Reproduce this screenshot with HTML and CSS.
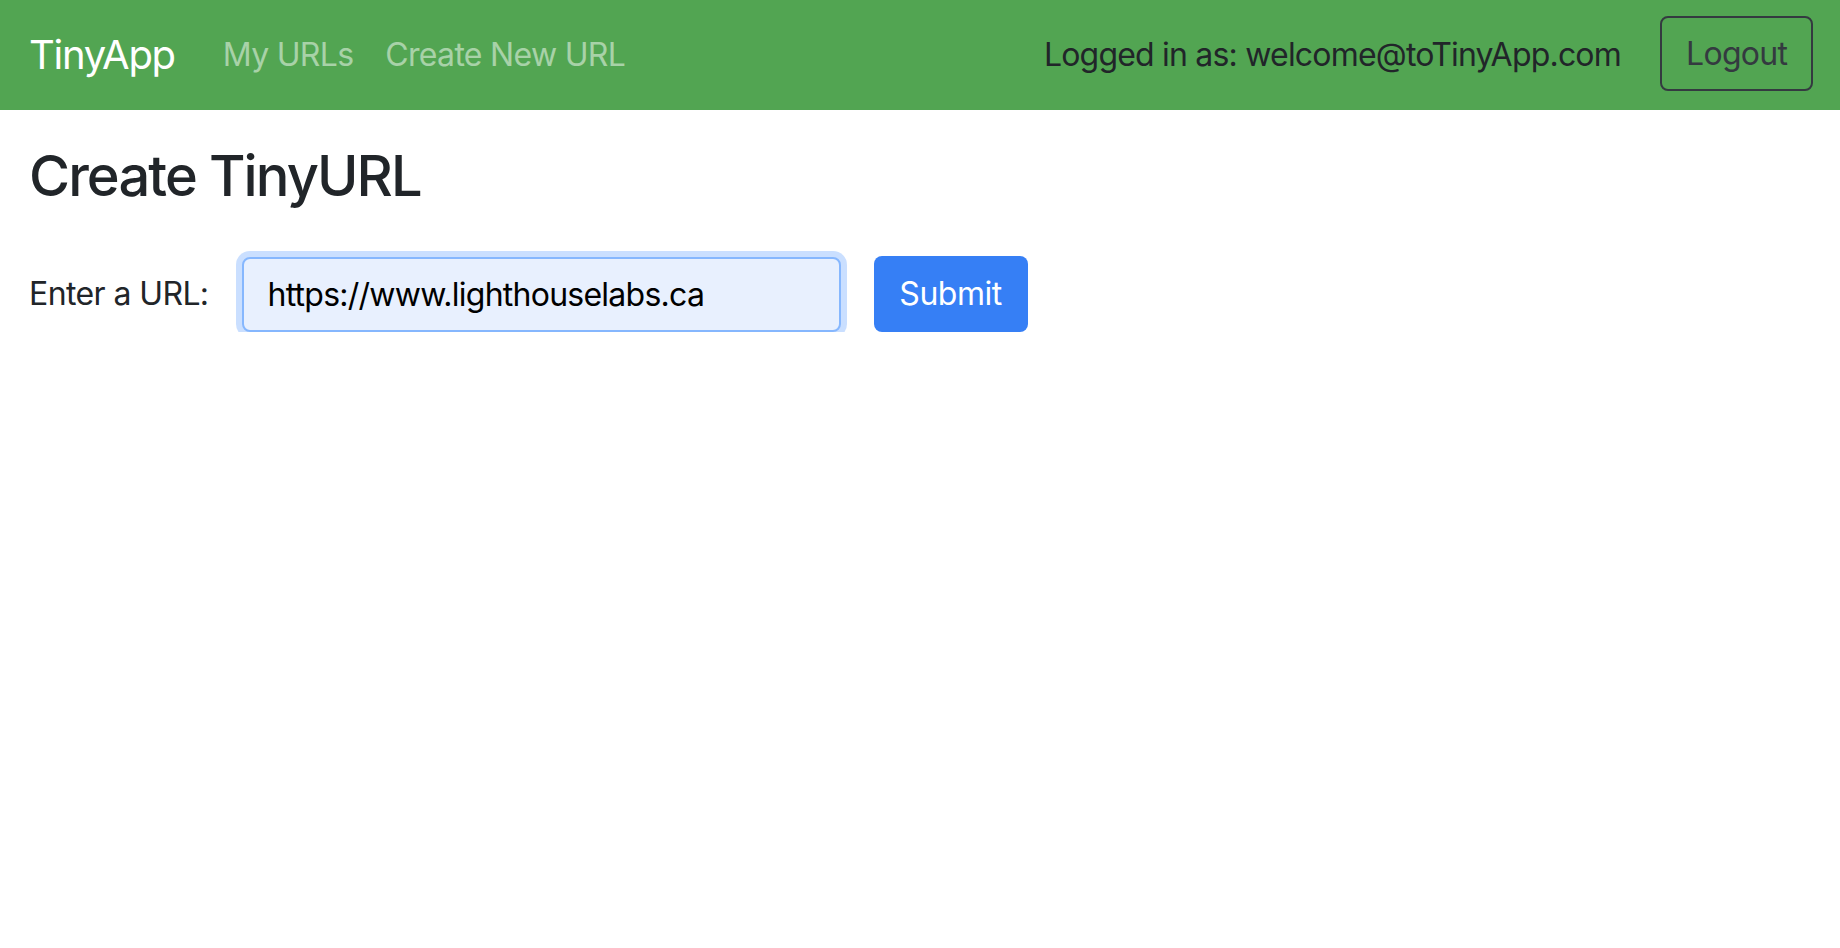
FILE: index.html
```html
<!DOCTYPE html>
<html lang="en">
<head>
<meta charset="utf-8">
<title>TinyApp</title>
<link rel="stylesheet" href="styles.css">
</head>
<body>
<nav class="navbar">
  <a class="brand" href="#">TinyApp</a>
  <div class="nav-links">
    <a class="nav-link" href="#">My URLs</a>
    <a class="nav-link" href="#">Create New URL</a>
  </div>
  <div class="nav-right">
    <span class="user">Logged in as: welcome@toTinyApp.com</span>
    <button class="btn-logout" type="button">Logout</button>
  </div>
</nav>
<main class="container">
  <h2 class="title">Create TinyURL</h2>
  <form class="url-form">
    <label class="url-label" for="longURL">Enter a URL:</label>
    <input class="url-input" id="longURL" type="text" value="https://www.lighthouselabs.ca">
    <button class="btn-submit" type="button">Submit</button>
  </form>
</main>
</body>
</html>
```

FILE: styles.css
```css
* { box-sizing: border-box; }

html, body {
  margin: 0;
  padding: 0;
  background: #ffffff;
  font-family: Inter, "Noto Sans", "Liberation Sans", sans-serif;
  color: #212529;
}

.navbar {
  display: flex;
  align-items: center;
  height: 110px;
  padding: 0 27px 0 29px;
  background: #52a552;
}

.brand {
  font-size: 40px;
  line-height: 60px;
  letter-spacing: -1.3px;
  color: #ffffff;
  text-decoration: none;
  margin-right: 32px;
}

.nav-links {
  display: flex;
  align-items: center;
}

.nav-link {
  font-size: 32px;
  line-height: 48px;
  letter-spacing: -0.7px;
  padding: 0 16px;
  color: rgba(255, 255, 255, 0.5);
  text-decoration: none;
}

.nav-right {
  margin-left: auto;
  display: flex;
  align-items: center;
  gap: 39px;
}

.user {
  font-size: 32px;
  line-height: 48px;
  letter-spacing: -0.8px;
  color: #212529;
}

.btn-logout {
  width: 153px;
  height: 75px;
  margin-top: -3px;
  border: 2px solid #343a40;
  border-radius: 8px;
  background: transparent;
  color: #343a40;
  font-family: inherit;
  font-size: 32px;
  line-height: 48px;
  letter-spacing: -0.7px;
  padding: 0 24px;
}

.container {
  padding: 0 29px;
}

.title {
  margin: 31px 0 44px;
  font-size: 56px;
  line-height: 71px;
  font-weight: 500;
  letter-spacing: -1.9px;
  color: #212529;
}

.url-form {
  display: flex;
  align-items: center;
  gap: 33px;
}

.url-label {
  font-size: 32px;
  line-height: 48px;
  letter-spacing: -0.6px;
  color: #212529;
}

.url-input {
  width: 599px;
  height: 75px;
  padding: 0 24px;
  border: 2px solid #86b7fe;
  border-radius: 8px;
  background: #e8f0fe;
  box-shadow: 0 0 0 6px rgba(13, 110, 253, 0.22);
  font-family: inherit;
  font-size: 32px;
  letter-spacing: -0.75px;
  color: #000000;
  outline: none;
}

.btn-submit {
  width: 154px;
  height: 76px;
  padding: 0 24px;
  border: none;
  border-radius: 8px;
  background: #367ff5;
  color: #ffffff;
  font-family: inherit;
  font-size: 32px;
  line-height: 48px;
  letter-spacing: -0.5px;
}
```
